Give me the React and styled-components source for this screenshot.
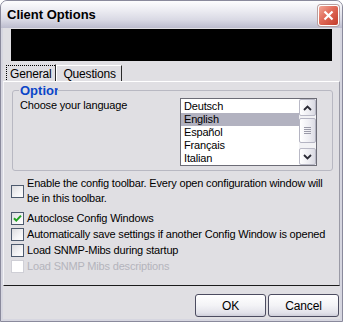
import React from 'react';
import styled, { createGlobalStyle } from 'styled-components';

const GlobalStyle = createGlobalStyle`
  html, body {
    margin: 0;
    padding: 0;
    background: #ffffff;
  }
  body {
    font-family: "Liberation Sans", Arial, sans-serif;
    font-size: 11px;
    letter-spacing: -0.18px;
    color: #000000;
  }
`;

const Window = styled.div`
  width: 343px;
  height: 322px;
  box-sizing: border-box;
  display: flex;
  flex-direction: column;
  border: 1px solid #8a8a9c;
  border-radius: 7px 7px 0 0;
  background: #d6d6e0;
  overflow: hidden;
`;

const TitleBar = styled.div`
  height: 27px;
  flex-shrink: 0;
  display: flex;
  align-items: center;
  justify-content: space-between;
  padding: 0 3px 0 6px;
  background: linear-gradient(#fdfdfe 0%, #ececf2 35%, #d9d9e4 70%, #bcbcce 100%);
`;

const Title = styled.span`
  font-family: "Liberation Sans", Arial, sans-serif;
  font-weight: bold;
  font-size: 13px;
  letter-spacing: 0;
  color: #000000;
`;

const CloseButton = styled.div`
  width: 21px;
  height: 21px;
  box-sizing: border-box;
  margin-top: 2px;
  border: 1px solid #ffffff;
  border-radius: 3px;
  background: linear-gradient(135deg, #f2a898 0%, #e06a58 45%, #c43c2a 100%);
  box-shadow: 0 0 0 1px #b8a0a0;
  display: flex;
  align-items: center;
  justify-content: center;
`;

const Client = styled.div`
  flex: 1;
  display: flex;
  flex-direction: column;
  margin: 0 2px 2px 2px;
  background: #e0dfe3;
`;

const BlackBar = styled.div`
  height: 32px;
  margin: 1px 8px 0 8px;
  background: #000000;
`;

const TabsRow = styled.div`
  height: 20px;
  display: flex;
  align-items: flex-end;
  padding-left: 2px;
`;

const Tab = styled.div`
  height: ${(p) => (p.$active ? '18px' : '16px')};
  display: flex;
  align-items: ${(p) => (p.$active ? 'stretch' : 'center')};
  box-sizing: border-box;
  border-top: 1px solid ${(p) => (p.$active ? 'transparent' : '#ffffff')};
  border-left: 1px solid ${(p) => (p.$active ? 'transparent' : '#ffffff')};
  border-right: 1px solid #2a2a2a;
  margin-bottom: ${(p) => (p.$active ? '-1px' : '0')};
  background: #e0dfe3;
`;

const TabLabel = styled.span`
  display: flex;
  align-items: center;
  padding: 0 ${(p) => (p.$active ? '4px' : '5px')} 0 ${(p) => (p.$active ? '3px' : '6px')};
  border: ${(p) => (p.$active ? '1px dotted #000000' : 'none')};
  border-right: none;
  font-size: 12px;
`;

const Panel = styled.div`
  height: 205px;
  box-sizing: border-box;
  display: flex;
  flex-direction: column;
  padding: 1px 7px 0 7px;
  border-top: 1px solid #ffffff;
  border-left: 1px solid #f4f4f6;
  border-right: 1px solid #9a9aa6;
  border-bottom: 1px solid #1c1c1c;
  background: #e0dfe3;
`;

const GroupBox = styled.fieldset`
  width: 321px;
  height: 88px;
  box-sizing: border-box;
  margin: 0 0 0 1px;
  padding: 0 15px 4px 7px;
  border: 1px solid #b8b8c2;
  border-radius: 3px;
`;

const Legend = styled.legend`
  max-width: 38px;
  overflow: hidden;
  white-space: nowrap;
  padding: 0 0 0 1px;
  margin-left: -1px;
  font-weight: bold;
  font-size: 13px;
  line-height: 15px;
  letter-spacing: 0;
  color: #0b46c8;
`;

const GroupBody = styled.div`
  display: flex;
  justify-content: space-between;
  align-items: flex-start;
`;

const Prompt = styled.span`
  margin-top: 1px;
  line-height: 13px;
`;

const ListBox = styled.div`
  width: 137px;
  height: 68px;
  box-sizing: border-box;
  display: flex;
  border: 1px solid #6c6c76;
  background: #ffffff;
`;

const Items = styled.div`
  flex: 1;
  padding-top: 1px;
  overflow: hidden;
`;

const Item = styled.div`
  height: 13px;
  line-height: 13px;
  padding-left: 3px;
  white-space: nowrap;
  background: ${(p) => (p.$selected ? '#b2b2c0' : 'transparent')};
`;

const ScrollBar = styled.div`
  width: 17px;
  display: flex;
  flex-direction: column;
  background: #f2f2f5;
`;

const ScrollButton = styled.div`
  height: 17px;
  box-sizing: border-box;
  border: 1px solid #b9b9c6;
  border-radius: 2px;
  background: linear-gradient(90deg, #ffffff 0%, #ececf1 60%, #d9d9e2 100%);
  display: flex;
  align-items: center;
  justify-content: center;
`;

const Track = styled.div`
  flex: 1;
  display: flex;
  flex-direction: column;
  padding-top: 2px;
`;

const Thumb = styled.div`
  height: 25px;
  box-sizing: border-box;
  border: 1px solid #b4b4c2;
  border-radius: 2px;
  background: linear-gradient(90deg, #ffffff 0%, #eeeef3 60%, #dcdce5 100%);
  display: flex;
  flex-direction: column;
  align-items: center;
  justify-content: center;
  gap: 1px;
`;

const Grip = styled.span`
  width: 7px;
  height: 1px;
  background: #9a9aa8;
`;

const CheckList = styled.div`
  display: flex;
  flex-direction: column;
  margin-top: 5px;
`;

const CheckRow = styled.label`
  display: flex;
  align-items: center;
  gap: 3px;
  min-height: 16px;
  margin-bottom: ${(p) => (p.$spaced ? '4px' : '0')};
  color: ${(p) => (p.$disabled ? '#b4b4bc' : '#000000')};
  line-height: 15px;
  white-space: nowrap;
`;

const Box = styled.span`
  width: 13px;
  height: 13px;
  flex-shrink: 0;
  box-sizing: border-box;
  border: 1px solid ${(p) => (p.$disabled ? '#cfcfd6' : '#4d5a6e')};
  background: ${(p) =>
    p.$disabled ? '#ffffff' : 'linear-gradient(135deg, #dcdcdf 0%, #f4f4f6 60%, #ffffff 100%)'};
  display: flex;
  align-items: center;
  justify-content: center;
`;

const ButtonRow = styled.div`
  display: flex;
  justify-content: flex-end;
  gap: 2px;
  padding: 8px 1px 0 0;
`;

const Button = styled.div`
  width: 71px;
  height: 23px;
  box-sizing: border-box;
  border: 1px solid #4c4c60;
  border-radius: 3px;
  background: linear-gradient(#ffffff 0%, #f3f3f6 50%, #e2e2ea 85%, #cfcfda 100%);
  display: flex;
  align-items: center;
  justify-content: center;
  font-size: 12px;
`;

const Check = () => (
  <svg width="9" height="9" viewBox="0 0 9 9">
    <path d="M1 4.2 L3.3 6.6 L8 1.6" fill="none" stroke="#21a121" strokeWidth="2" />
  </svg>
);

const Arrow = ({ up }) => (
  <svg width="9" height="6" viewBox="0 0 9 6">
    <path
      d={up ? 'M1 5 L4.5 1.5 L8 5' : 'M1 1 L4.5 4.5 L8 1'}
      fill="none"
      stroke="#2b2b35"
      strokeWidth="1.8"
    />
  </svg>
);

const languages = ['Deutsch', 'English', 'Español', 'Français', 'Italian'];

const options = [
  { label: 'Autoclose Config Windows', checked: true },
  { label: 'Automatically save settings if another Config Window is opened' },
  { label: 'Load SNMP-Mibs during startup' },
  { label: 'Load SNMP Mibs descriptions', disabled: true },
];

export default function App() {
  return (
    <>
      <GlobalStyle />
      <Window>
        <TitleBar>
          <Title>Client Options</Title>
          <CloseButton>
            <svg width="11" height="11" viewBox="0 0 11 11">
              <path d="M1.5 1.5 L9.5 9.5 M9.5 1.5 L1.5 9.5" stroke="#ffffff" strokeWidth="2.2" />
            </svg>
          </CloseButton>
        </TitleBar>
        <Client>
          <BlackBar />
          <TabsRow>
            <Tab $active>
              <TabLabel $active>General</TabLabel>
            </Tab>
            <Tab>
              <TabLabel>Questions</TabLabel>
            </Tab>
          </TabsRow>
          <Panel>
            <GroupBox>
              <Legend>Options</Legend>
              <GroupBody>
                <Prompt>Choose your language</Prompt>
                <ListBox>
                  <Items>
                    {languages.map((l) => (
                      <Item key={l} $selected={l === 'English'}>
                        {l}
                      </Item>
                    ))}
                  </Items>
                  <ScrollBar>
                    <ScrollButton>
                      <Arrow up />
                    </ScrollButton>
                    <Track>
                      <Thumb>
                        <Grip />
                        <Grip />
                        <Grip />
                        <Grip />
                      </Thumb>
                    </Track>
                    <ScrollButton>
                      <Arrow />
                    </ScrollButton>
                  </ScrollBar>
                </ListBox>
              </GroupBody>
            </GroupBox>
            <CheckList>
              <CheckRow $spaced>
                <Box />
                <span>
                  Enable the config toolbar. Every open configuration window will
                  <br />
                  be in this toolbar.
                </span>
              </CheckRow>
              {options.map((o) => (
                <CheckRow key={o.label} $disabled={o.disabled}>
                  <Box $disabled={o.disabled}>{o.checked && <Check />}</Box>
                  <span>{o.label}</span>
                </CheckRow>
              ))}
            </CheckList>
          </Panel>
          <ButtonRow>
            <Button>OK</Button>
            <Button>Cancel</Button>
          </ButtonRow>
        </Client>
      </Window>
    </>
  );
}
